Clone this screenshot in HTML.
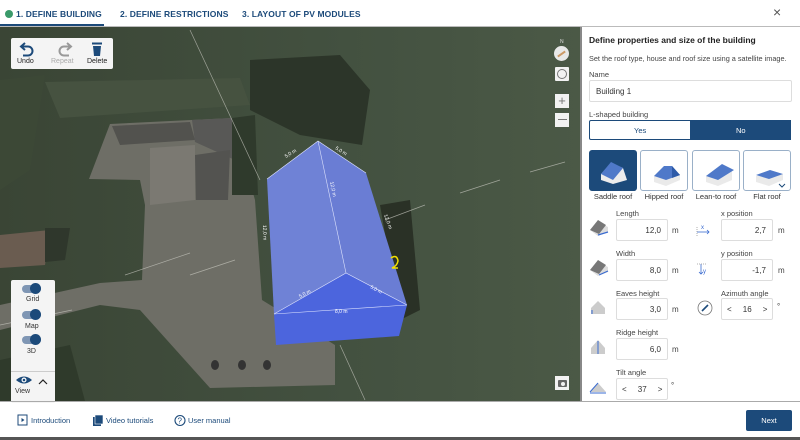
<!DOCTYPE html>
<html><head><meta charset="utf-8"><style>
*{box-sizing:border-box;margin:0;padding:0}
body{width:800px;height:440px;overflow:hidden;background:#fff;font-family:"Liberation Sans",sans-serif;position:relative;color:#333}
.a{position:absolute}
.tab{position:absolute;top:9px;font-size:8.5px;font-weight:bold;color:#1c4a7a;letter-spacing:.1px}
.lbl{position:absolute;font-size:7.5px;color:#444}
.inp{position:absolute;height:22px;border:1px solid #ddd;border-radius:2px;background:#fff;font-size:8px;color:#333;text-align:right;padding:6px 6px 0 0}
.unit{position:absolute;font-size:8px;color:#444}
.tile{position:absolute;top:150px;width:48px;height:41px;border:1px solid #9ab0c8;border-radius:3px;background:#fff}
.tl{position:absolute;top:192px;font-size:7.5px;color:#333;text-align:center;width:56px}
.mb{position:absolute;background:#f4f4f4;border-radius:2px}
</style></head><body>
<!-- top bar -->
<div class="a" style="left:0;top:0;width:800px;height:27px;background:#fff;border-bottom:1px solid #bbb"></div>
<div class="a" style="left:5px;top:10px;width:8px;height:8px;border-radius:50%;background:#3a9a6a"></div>
<div class="tab" style="left:16px">1. DEFINE BUILDING</div>
<div class="a" style="left:0;top:24px;width:104px;height:2px;background:#1c4a7a"></div>
<div class="tab" style="left:120px">2. DEFINE RESTRICTIONS</div>
<div class="tab" style="left:242px">3. LAYOUT OF PV MODULES</div>
<div class="a" style="left:773px;top:4px;font-size:14px;color:#555">×</div>

<!-- map -->
<svg class="a" style="left:0;top:27px" width="581" height="374" viewBox="0 27 581 374">
<defs>
<linearGradient id="g1" x1="0" x2="1" y1="0" y2="0"><stop offset="0" stop-color="#3a4535"/><stop offset=".6" stop-color="#435140"/><stop offset="1" stop-color="#4b5946"/></linearGradient>
</defs>
<rect x="0" y="27" width="581" height="374" fill="url(#g1)"/>
<path d="M250 60 L340 55 L370 90 L362 145 L300 135 L250 110Z" fill="#2c3529"/>
<path d="M0 80 L45 75 L30 170 L0 190Z" fill="#3c4836"/>
<path d="M0 360 L70 345 L85 401 L0 401Z" fill="#2f3a2b"/>
<path d="M45 82 L240 78 L250 105 L60 118 Z" fill="#465240"/>
<path d="M89 179 L110 124 L232 118 L255 200 L262 300 L335 345 L335 385 L210 388 L140 310 L100 305 L0 330 L0 305 L100 283 L142 280 L145 205 L140 180Z" fill="#6e6e66"/>
<path d="M112 126 L190 122 L195 140 L120 145Z" fill="#52524e"/>
<path d="M192 120 L232 118 L235 160 L195 142Z" fill="#585856"/>
<path d="M195 155 L230 150 L228 200 L196 200Z" fill="#535350"/>
<path d="M150 148 L195 145 L195 200 L150 205Z" fill="#7b7972"/>
<path d="M232 118 L255 115 L258 195 L232 195Z" fill="#2f3a2c"/>
<path d="M0 235 L50 230 L45 265 L0 268Z" fill="#6a5c50"/>
<path d="M45 228 L70 228 L65 260 L45 262Z" fill="#2f372c"/>
<ellipse cx="215" cy="365" rx="4" ry="5" fill="#333"/><ellipse cx="242" cy="365" rx="4" ry="5" fill="#333"/><ellipse cx="267" cy="365" rx="4" ry="5" fill="#333"/>
<path d="M380 205 L410 200 L420 310 L400 320Z" fill="#2a3126"/>
<g stroke="#c8c8c0" stroke-width="0.7" opacity=".7">
<line x1="190" y1="30" x2="260" y2="180"/><line x1="235" y1="260" x2="190" y2="275"/><line x1="125" y1="275" x2="190" y2="253"/>
<line x1="0" y1="325" x2="72" y2="310"/><line x1="340" y1="345" x2="365" y2="400"/>
<line x1="385" y1="220" x2="425" y2="205"/><line x1="460" y1="193" x2="500" y2="180"/><line x1="530" y1="172" x2="565" y2="162"/>
</g>
<!-- building -->
<polygon points="267,179 318,141 346,273 274,314" fill="#6f82d6"/>
<polygon points="318,141 366,173 407,305 346,273" fill="#6a7dd4"/>
<polygon points="274,314 346,273 407,305 399,336 276,345" fill="#4c65dd"/>
<g stroke="#dfe4ff" stroke-width=".6" fill="none"><polyline points="267,179 318,141 366,173"/><line x1="318" y1="141" x2="346" y2="273"/><polyline points="274,314 346,273 407,305"/><line x1="274" y1="314" x2="407" y2="305"/></g>
<g font-size="5" fill="#fff" font-family="Liberation Sans">
<text x="286" y="158" transform="rotate(-32 286 158)">5,0 m</text>
<text x="335" y="149" transform="rotate(32 335 149)">5,0 m</text>
<text x="330" y="182" transform="rotate(78 330 182)">12,0 m</text>
<text x="263" y="225" transform="rotate(88 263 225)">12,0 m</text>
<text x="384" y="215" transform="rotate(70 384 215)">12,0 m</text>
<text x="300" y="298" transform="rotate(-28 300 298)">5,0 m</text>
<text x="370" y="288" transform="rotate(28 370 288)">5,0 m</text>
<text x="335" y="313">8,0 m</text>
</g>
<path d="M391 258 q6 -4 7 3 q-1 5 -6 7 l6 0" stroke="#f3e000" stroke-width="1.5" fill="none"/>
</svg>

<!-- undo panel -->
<div class="mb" style="left:11px;top:38px;width:102px;height:31px"></div>
<svg class="a" style="left:19px;top:41px" width="90" height="16" viewBox="0 0 90 16">
<path d="M6 2 L2 5.5 L6 9 M2 5.5 H9 a4.5 4.5 0 0 1 0 9 H4" stroke="#1c4a7a" stroke-width="2" fill="none"/>
<path d="M48 2 L52 5.5 L48 9 M52 5.5 H45 a4.5 4.5 0 0 0 0 9 H50" stroke="#999" stroke-width="2" fill="none"/>
<rect x="73" y="1.5" width="10" height="2" fill="#1c4a7a"/><path d="M74 5 H82 L81 15 H75Z" fill="#1c4a7a"/>
</svg>
<div class="a" style="left:17px;top:58px;font-size:7px;color:#222">Undo</div>
<div class="a" style="left:51px;top:58px;font-size:7px;color:#aaa">Repeat</div>
<div class="a" style="left:87px;top:58px;font-size:7px;color:#222">Delete</div>

<!-- view panel -->
<div class="mb" style="left:11px;top:280px;width:44px;height:123px"></div>
<div class="a" style="left:11px;top:371px;width:44px;height:1px;background:#ccc"></div>
<div class="a" style="left:22px;top:285px;width:19px;height:8px;border-radius:4px;background:#7f96b4"></div><div class="a" style="left:30px;top:283px;width:11px;height:11px;border-radius:50%;background:#1c4a7a"></div>
<div class="a" style="left:26px;top:296px;font-size:7px;color:#333">Grid</div>
<div class="a" style="left:22px;top:311px;width:19px;height:8px;border-radius:4px;background:#7f96b4"></div><div class="a" style="left:30px;top:309px;width:11px;height:11px;border-radius:50%;background:#1c4a7a"></div>
<div class="a" style="left:25px;top:323px;font-size:7px;color:#333">Map</div>
<div class="a" style="left:22px;top:336px;width:19px;height:8px;border-radius:4px;background:#7f96b4"></div><div class="a" style="left:30px;top:334px;width:11px;height:11px;border-radius:50%;background:#1c4a7a"></div>
<div class="a" style="left:27px;top:348px;font-size:7px;color:#333">3D</div>
<svg class="a" style="left:15px;top:375px" width="36" height="12"><path d="M1 5 Q9 -2 17 5 Q9 12 1 5Z" fill="#1c4a7a"/><circle cx="9" cy="5" r="2.5" fill="#fff"/><circle cx="9" cy="5" r="1.3" fill="#1c4a7a"/><path d="M24 9 L28 5 L32 9" stroke="#222" fill="none" stroke-width="1.2"/></svg>
<div class="a" style="left:15px;top:388px;font-size:7px;color:#333">View</div>

<!-- right map controls -->
<div class="a" style="left:560px;top:39px;font-size:5px;color:#ddd">N</div>
<div class="a" style="left:554px;top:46px;width:15px;height:15px;border-radius:50%;background:#e8e8e8"></div>
<div class="a" style="left:557px;top:53px;width:9px;height:2px;background:#c96;transform:rotate(-35deg)"></div>
<div class="a" style="left:555px;top:67px;width:14px;height:14px;background:#f2f2f2;border-radius:1px"></div>
<div class="a" style="left:557px;top:69px;width:10px;height:10px;border:1.2px solid #777;border-radius:50%"></div>
<div class="a" style="left:555px;top:94px;width:14px;height:14px;background:#f2f2f2;font-size:13px;line-height:13px;text-align:center;color:#777">+</div>
<div class="a" style="left:555px;top:113px;width:14px;height:14px;background:#f2f2f2;"></div><div class="a" style="left:558px;top:119px;width:9px;height:1.3px;background:#777"></div>
<div class="a" style="left:555px;top:376px;width:14px;height:14px;background:#f2f2f2"></div>
<div class="a" style="left:558px;top:380px;width:9px;height:7px;background:#666;border-radius:1px"></div><div class="a" style="left:560.5px;top:381.5px;width:4px;height:4px;background:#f2f2f2;border-radius:50%"></div>

<!-- right panel -->
<div class="a" style="left:580px;top:27px;width:2px;height:374px;background:#888"></div>
<div class="a" style="left:589px;top:35px;font-size:8.5px;font-weight:bold;color:#222">Define properties and size of the building</div>
<div class="lbl" style="left:589px;top:54px;font-size:7.3px">Set the roof type, house and roof size using a satellite image.</div>
<div class="lbl" style="left:589px;top:70px">Name</div>
<div class="inp" style="left:589px;top:80px;width:203px;text-align:left;padding-left:6px">Building 1</div>
<div class="lbl" style="left:589px;top:110px">L-shaped building</div>
<div class="a" style="left:589px;top:120px;width:202px;height:20px;border:1px solid #1c4a7a;border-radius:2px;background:#fff"></div>
<div class="a" style="left:690px;top:120px;width:101px;height:20px;background:#1c4a7a"></div>
<div class="a" style="left:634px;top:126px;font-size:7.5px;color:#1c4a7a">Yes</div>
<div class="a" style="left:736px;top:126px;font-size:7.5px;color:#fff">No</div>

<div class="tile" style="left:589px;background:#1c4a7a;border-color:#1c4a7a"></div>
<div class="tile" style="left:640px"></div>
<div class="tile" style="left:692px"></div>
<div class="tile" style="left:743px"></div>
<svg class="a" style="left:589px;top:150px" width="202" height="41">
<g transform="translate(10,8)"><path d="M2 16 L12 5 L24 10 L28 22 L14 26 L2 22Z" fill="#ececec"/><path d="M2 16 L12 4 L24 10 L14 22Z" fill="#4f79c9"/></g>
<g transform="translate(61,8)"><path d="M4 18 L4 24 L16 28 L30 22 L30 17Z" fill="#eaeaea"/><path d="M4 18 L14 8 L22 8 L30 17 L16 22Z" fill="#4f79c9"/><path d="M22 8 L30 17 L22 20Z" fill="#2d5aa8"/></g>
<g transform="translate(113,8)"><path d="M4 18 L4 24 L16 28 L30 22 L30 12Z" fill="#eaeaea"/><path d="M4 18 L20 6 L32 12 L16 22Z" fill="#4f79c9"/></g>
<g transform="translate(164,12)"><path d="M3 14 L3 20 L16 24 L30 18 L30 12Z" fill="#eaeaea"/><path d="M3 13 L17 8 L30 12 L16 17Z" fill="#4f79c9"/><path d="M26 22 L29 25 L32 22" stroke="#1c4a7a" fill="none" stroke-width="1"/></g>
</svg>
<div class="tl" style="left:585px">Saddle roof</div>
<div class="tl" style="left:636px">Hipped roof</div>
<div class="tl" style="left:688px">Lean-to roof</div>
<div class="tl" style="left:739px">Flat roof</div>

<div class="lbl" style="left:616px;top:209px">Length</div>
<div class="inp" style="left:616px;top:219px;width:52px">12,0</div><div class="unit" style="left:672px;top:226px">m</div>
<div class="lbl" style="left:616px;top:249px">Width</div>
<div class="inp" style="left:616px;top:259px;width:52px">8,0</div><div class="unit" style="left:672px;top:266px">m</div>
<div class="lbl" style="left:616px;top:289px">Eaves height</div>
<div class="inp" style="left:616px;top:298px;width:52px">3,0</div><div class="unit" style="left:672px;top:305px">m</div>
<div class="lbl" style="left:616px;top:328px">Ridge height</div>
<div class="inp" style="left:616px;top:338px;width:52px">6,0</div><div class="unit" style="left:672px;top:345px">m</div>
<div class="lbl" style="left:616px;top:368px">Tilt angle</div>
<div class="inp" style="left:616px;top:378px;width:52px;text-align:left;padding-left:5px;white-space:pre">&lt;     37     &gt;</div><div class="unit" style="left:671px;top:381px">°</div>

<div class="lbl" style="left:721px;top:209px">x position</div>
<div class="inp" style="left:721px;top:219px;width:52px">2,7</div><div class="unit" style="left:778px;top:226px">m</div>
<div class="lbl" style="left:721px;top:249px">y position</div>
<div class="inp" style="left:721px;top:259px;width:52px">-1,7</div><div class="unit" style="left:778px;top:266px">m</div>
<div class="lbl" style="left:721px;top:289px">Azimuth angle</div>
<div class="inp" style="left:721px;top:298px;width:52px;text-align:left;padding-left:5px;white-space:pre">&lt;     16     &gt;</div><div class="unit" style="left:777px;top:302px">°</div>

<svg class="a" style="left:588px;top:218px" width="125" height="180">
<g><path d="M2 12 L10 4 L20 9 L20 14 L10 18Z" fill="#ddd"/><path d="M2 12 L10 2 L18 7 L11 16Z" fill="#777"/><line x1="10" y1="17" x2="20" y2="14" stroke="#3a6bd0" stroke-width="1.2"/></g>
<g transform="translate(0,40)"><path d="M2 12 L10 4 L20 9 L20 14 L10 18Z" fill="#ddd"/><path d="M2 12 L10 2 L18 7 L11 16Z" fill="#777"/><line x1="11" y1="17" x2="20" y2="13" stroke="#3a6bd0" stroke-width="1.2"/></g>
<g transform="translate(3,82)"><path d="M0 14 L0 8 L7 1 L14 8 L14 14Z" fill="#ccc"/><line x1="1" y1="10" x2="1" y2="14" stroke="#3a6bd0"/></g>
<g transform="translate(3,122)"><path d="M0 14 L0 8 L7 0 L14 8 L14 14Z" fill="#ccc"/><line x1="7" y1="1" x2="7" y2="14" stroke="#3a6bd0"/></g>
<g transform="translate(2,162)"><path d="M0 12 L8 3 L16 12Z" fill="#ccc"/><path d="M0 12 L8 3 M0 13 H16" stroke="#3a6bd0" fill="none"/></g>
<g transform="translate(109,4)" stroke="#3a6bd0" fill="none" stroke-width=".8"><line x1="0" y1="10" x2="12" y2="10"/><path d="M10 8 L12 10 L10 12"/><line x1="0" y1="5" x2="0" y2="14" stroke="#999" stroke-dasharray="1,1"/><text x="4" y="7" font-size="6" fill="#3a6bd0" stroke="none">x</text></g>
<g transform="translate(109,44)" stroke="#3a6bd0" fill="none" stroke-width=".8"><line x1="4" y1="2" x2="4" y2="12"/><path d="M2 10 L4 12 L6 10"/><line x1="0" y1="2" x2="9" y2="2" stroke="#999" stroke-dasharray="1,1"/><text x="6" y="11" font-size="6" fill="#3a6bd0" stroke="none">y</text></g>
<g transform="translate(117,90)"><circle cx="0" cy="0" r="7" fill="#fff" stroke="#777" stroke-width=".8"/><line x1="-3" y1="3" x2="3" y2="-3" stroke="#1c4a7a" stroke-width="1.6"/></g>
</svg>

<!-- footer -->
<div class="a" style="left:0;top:401px;width:800px;height:1px;background:#aaa"></div>
<div class="a" style="left:0;top:437px;width:800px;height:3px;background:#555"></div>
<svg class="a" style="left:17px;top:414px" width="180" height="13">
<rect x="1" y="1" width="9" height="10" fill="none" stroke="#1c4a7a" stroke-width="1"/><path d="M4.5 4 L7.5 6 L4.5 8Z" fill="#1c4a7a"/>
<rect x="76" y="3" width="8" height="9" fill="#1c4a7a"/><rect x="78" y="1" width="8" height="9" fill="#1c4a7a" stroke="#fff" stroke-width=".6"/>
<circle cx="163" cy="6.5" r="5" fill="none" stroke="#1c4a7a" stroke-width="1.1"/><text x="160.5" y="9.5" font-size="8" fill="#1c4a7a" font-family="Liberation Sans">?</text>
</svg>
<div class="a" style="left:31px;top:416px;font-size:7.5px;color:#1c4a7a">Introduction</div>
<div class="a" style="left:106px;top:416px;font-size:7.5px;color:#1c4a7a">Video tutorials</div>
<div class="a" style="left:188px;top:416px;font-size:7.5px;color:#1c4a7a">User manual</div>
<div class="a" style="left:746px;top:410px;width:46px;height:21px;background:#1c4a7a;border-radius:2px;color:#fff;font-size:7.5px;text-align:center;line-height:21px">Next</div>
</body></html>
